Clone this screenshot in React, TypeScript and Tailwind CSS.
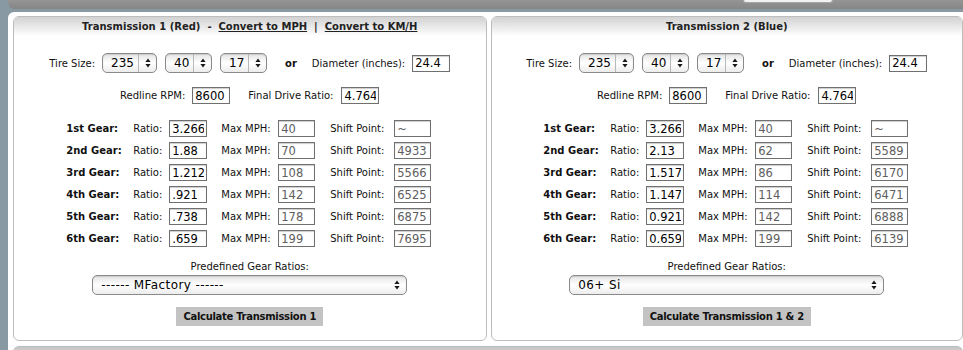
import React from 'react';

interface Gear {
  name: string;
  ratio: string;
  mph: string;
  shift: string;
}

interface TransmissionProps {
  title: React.ReactNode;
  width: string;
  preset: string;
  button: string;
  gears: Gear[];
}

const gears1: Gear[] = [
  { name: '1st Gear:', ratio: '3.266', mph: '40', shift: '~' },
  { name: '2nd Gear:', ratio: '1.88', mph: '70', shift: '4933' },
  { name: '3rd Gear:', ratio: '1.212', mph: '108', shift: '5566' },
  { name: '4th Gear:', ratio: '.921', mph: '142', shift: '6525' },
  { name: '5th Gear:', ratio: '.738', mph: '178', shift: '6875' },
  { name: '6th Gear:', ratio: '.659', mph: '199', shift: '7695' },
];

const gears2: Gear[] = [
  { name: '1st Gear:', ratio: '3.266', mph: '40', shift: '~' },
  { name: '2nd Gear:', ratio: '2.13', mph: '62', shift: '5589' },
  { name: '3rd Gear:', ratio: '1.517', mph: '86', shift: '6170' },
  { name: '4th Gear:', ratio: '1.147', mph: '114', shift: '6471' },
  { name: '5th Gear:', ratio: '0.921', mph: '142', shift: '6888' },
  { name: '6th Gear:', ratio: '0.659', mph: '199', shift: '6139' },
];

const Arrows = () => (
  <svg width="6" height="10" viewBox="0 0 6 10">
    <path d="M3 0.5 L5.6 4 H0.4 Z M3 9.5 L5.6 6 H0.4 Z" fill="#1a1a1a" />
  </svg>
);

const PopUp: React.FC<{ value: string; w: string; sep?: boolean; text?: string }> = ({ value, w, sep = true, text = 'text-[12px]' }) => (
  <div className={`flex h-[20px] items-center rounded-[5px] border border-[#8a8a8a] bg-linear-to-b from-[#e4e4e4] via-white to-[#ececec] shadow-[inset_0_1px_1px_rgba(0,0,0,0.12)] ${w}`}>
    <span className={`flex-1 pl-[8px] ${text} leading-none text-black`}>{value}</span>
    <span className={`flex h-full w-[18px] items-center justify-center ${sep ? 'border-l border-[#b8b8b8]' : ''}`}>
      <Arrows />
    </span>
  </div>
);

const Field: React.FC<{ value: string; muted?: boolean; w?: string }> = ({ value, muted, w = 'w-[38px]' }) => (
  <input
    readOnly
    value={value}
    className={`h-[17px] ${w} border border-[#707070] bg-white px-[2px] text-[11.5px] leading-[15px] shadow-[inset_0_1px_1px_rgba(0,0,0,0.2)] outline-none ${muted ? 'text-[#5e5e5e]' : 'text-black'}`}
  />
);

const Transmission: React.FC<TransmissionProps> = ({ title, width, preset, button, gears }) => (
  <div className={`${width} overflow-hidden rounded-[6px] border border-[#bdbdbd] bg-white`}>
    <div className="flex h-[19px] items-center justify-center bg-linear-to-b from-[#d2d2d2] to-white text-[10px] font-bold text-[#222]">
      {title}
    </div>

    <div className="mt-[17px] flex items-center justify-center">
      <span>Tire Size:</span>
      <div className="ml-[7px] flex gap-[8px]">
        <PopUp value="235" w="w-[55px]" />
        <PopUp value="40" w="w-[47px]" />
        <PopUp value="17" w="w-[47px]" />
      </div>
      <span className="ml-[18px] font-bold">or</span>
      <span className="ml-[15px]">Diameter (inches):</span>
      <Field value="24.4" w="ml-[7px] w-[38px]" />
    </div>

    <div className="mt-[14px] flex items-center justify-center">
      <span>Redline RPM:</span>
      <Field value="8600" w="ml-[7px] w-[38px]" />
      <span className="ml-[18px]">Final Drive Ratio:</span>
      <Field value="4.764" w="ml-[8px] w-[38px]" />
    </div>

    <div className="mt-[16px] flex justify-center">
      <div className="mr-[2px] grid grid-cols-[67px_36px_52px_57px_52px_64px_37px] items-center gap-y-[5px]">
        {gears.map(g => (
          <React.Fragment key={g.name}>
            <span className="font-bold">{g.name}</span>
            <span>Ratio:</span>
            <Field value={g.ratio} />
            <span>Max MPH:</span>
            <Field value={g.mph} muted w="w-[37px]" />
            <span>Shift Point:</span>
            <Field value={g.shift} muted w="w-[37px]" />
          </React.Fragment>
        ))}
      </div>
    </div>

    <div className="mt-[14px] text-center leading-[12px]">Predefined Gear Ratios:</div>
    <div className="mt-[2px] flex justify-center">
      <PopUp value={preset} w="w-[315px]" sep={false} text="text-[12px] tracking-[0.4px]" />
    </div>
    <div className="mt-[12px] mb-[14px] flex justify-center">
      <button type="button" className="h-[19px] bg-[#c3c3c3] px-[7px] text-[10px] font-bold tracking-[-0.3px] text-[#111]">
        {button}
      </button>
    </div>
  </div>
);

const App: React.FC = () => (
  <div className="h-[350px] w-[963px] overflow-hidden bg-[#8999a4] font-['DejaVu_Sans',sans-serif] text-[10px] text-[#111]">
    <div className="ml-2 flex h-[9px] rounded-bl-[6px] bg-linear-to-b from-[#959595] to-[#868686]">
      <div className="ml-[735px] h-[3px] w-[90px] rounded-b-[3px] border border-t-0 border-[#a5a5a5] bg-[#f2f2f2]" />
    </div>
    <div className="mt-[3px] ml-2 rounded-tl-[6px] bg-white pt-[4px] pl-[5px]">
      <div className="flex gap-[4px]">
        <Transmission
          width="w-[474px]"
          title={
            <span>
              Transmission 1 (Red)&nbsp; -&nbsp; <span className="underline">Convert to MPH</span>&nbsp; |&nbsp;{' '}
              <span className="underline">Convert to KM/H</span>
            </span>
          }
          preset="------ MFactory ------"
          button="Calculate Transmission 1"
          gears={gears1}
        />
        <Transmission
          width="w-[473px]"
          title="Transmission 2 (Blue)"
          preset="06+ Si"
          button="Calculate Transmission 1 & 2"
          gears={gears2}
        />
      </div>
      <div className="mt-[5px] h-[40px] rounded-t-[6px] border border-[#bdbdbd] bg-linear-to-b from-[#c6c6c6] to-white" />
    </div>
  </div>
);

export default App;
